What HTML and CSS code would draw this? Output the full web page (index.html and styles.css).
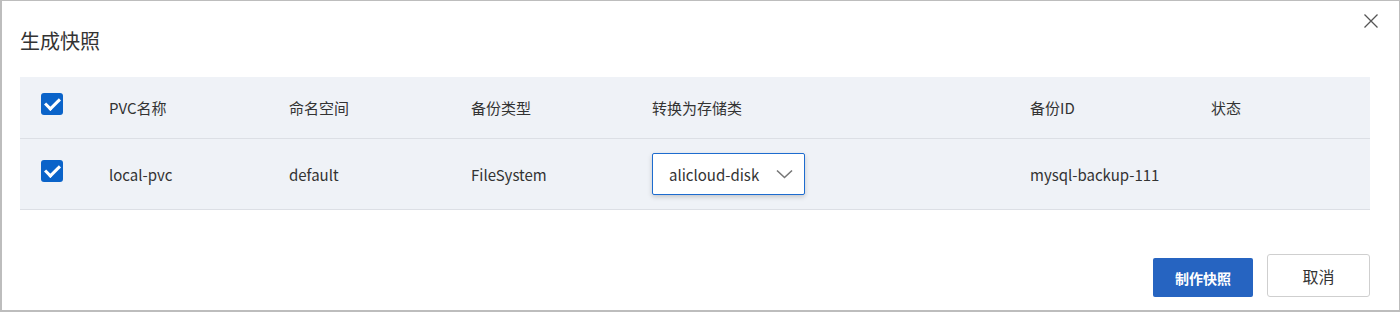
FILE: index.html
```html
<!DOCTYPE html>
<html lang="zh-CN">

<head>
  <meta charset="UTF-8">
  <meta name="viewport" content="width=device-width, initial-scale=1.0">
  <title>生成快照</title>
  <link rel="stylesheet" href="styles.css">
</head>

<body>

  <div class="dialog">
    <div class="dialog-header">
      <h2>生成快照</h2>
      <button class="close-button" title="关闭">
        <svg width="14" height="14" viewBox="0 0 14 14">
          <path d="M0.5 0.5 L13.5 13.5 M13.5 0.5 L0.5 13.5" stroke="#555" stroke-width="1.3" fill="none" />
        </svg>
      </button>
    </div>

    <table class="snapshot-table">
      <colgroup>
        <col style="width: 89px">
        <col style="width: 180px">
        <col style="width: 182px">
        <col style="width: 181px">
        <col style="width: 378px">
        <col style="width: 181px">
        <col>
      </colgroup>
      <thead>
        <tr>
          <th><span class="checkbox"></span></th>
          <th>PVC名称</th>
          <th>命名空间</th>
          <th>备份类型</th>
          <th>转换为存储类</th>
          <th>备份ID</th>
          <th>状态</th>
        </tr>
      </thead>
      <tbody>
        <tr>
          <td><span class="checkbox"></span></td>
          <td>local-pvc</td>
          <td>default</td>
          <td>FileSystem</td>
          <td>
            <div class="select">
              <span>alicloud-disk</span>
              <svg width="17" height="10" viewBox="0 0 17 10">
                <path d="M1 1.5 L8.5 8.5 L16 1.5" stroke="#777" stroke-width="1.6" fill="none" />
              </svg>
            </div>
          </td>
          <td>mysql-backup-111</td>
          <td></td>
        </tr>
      </tbody>
    </table>

    <div class="dialog-footer">
      <button class="primary-button">制作快照</button>
      <button class="cancel-button">取消</button>
    </div>
  </div>

</body>

</html>
```

FILE: styles.css
```css
body {
  margin: 0;
  font-family: "Noto Sans CJK SC", "Noto Sans", sans-serif;
  color: #333;
  background: #fff;
}

.dialog {
  position: relative;
  box-sizing: border-box;
  height: 312px;
  border: 1px solid #bdbdbd;
  border-left-width: 2px;
  border-bottom-width: 2px;
  padding: 0 29px 0 18px;
}

.dialog-header h2 {
  margin: 0;
  padding-top: 26px;
  font-size: 20px;
  font-weight: normal;
  line-height: 28px;
  color: #333;
}

.close-button {
  position: absolute;
  top: 13px;
  right: 21px;
  padding: 0;
  border: none;
  background: none;
  cursor: pointer;
  line-height: 0;
}

.snapshot-table {
  width: 100%;
  margin-top: 22px;
  border-collapse: collapse;
  table-layout: fixed;
  background-color: #eff2f7;
  font-size: 15px;
}

.snapshot-table th,
.snapshot-table td {
  padding: 0;
  text-align: left;
  font-weight: normal;
  border-bottom: 1px solid #dcdfe5;
  white-space: nowrap;
}

.snapshot-table th {
  height: 61px;
}

.snapshot-table td {
  height: 70px;
}

.snapshot-table th:first-child,
.snapshot-table td:first-child {
  padding-left: 21px;
}

.checkbox {
  display: block;
  position: relative;
  width: 22px;
  height: 22px;
  margin-top: -7px;
  border-radius: 3px;
  background-color: #0a63c9;
}

.checkbox::after {
  content: "";
  position: absolute;
  left: 7px;
  top: 2px;
  width: 6px;
  height: 12px;
  border-right: 3px solid #fff;
  border-bottom: 3px solid #fff;
  transform: rotate(45deg);
}

.select {
  display: flex;
  align-items: center;
  justify-content: space-between;
  box-sizing: border-box;
  width: 153px;
  height: 42px;
  padding: 0 11px 0 16px;
  border: 1px solid #1d6ccf;
  border-radius: 2px;
  background: #fff;
  box-shadow: 0 2px 5px rgba(0, 0, 0, 0.18);
  color: #333;
  font-size: 15px;
}

.dialog-footer {
  display: flex;
  justify-content: flex-end;
  align-items: flex-end;
  gap: 14px;
  margin-top: 44px;
}

.primary-button {
  width: 100px;
  height: 39px;
  border: none;
  border-radius: 2px;
  background-color: #2664c1;
  color: white;
  font-family: inherit;
  font-size: 14px;
  font-weight: bold;
  cursor: pointer;
}

.cancel-button {
  width: 103px;
  height: 43px;
  border: 1px solid #cfcfcf;
  border-radius: 3px;
  background-color: #fff;
  color: #333;
  font-family: inherit;
  font-size: 16px;
  cursor: pointer;
}
```
